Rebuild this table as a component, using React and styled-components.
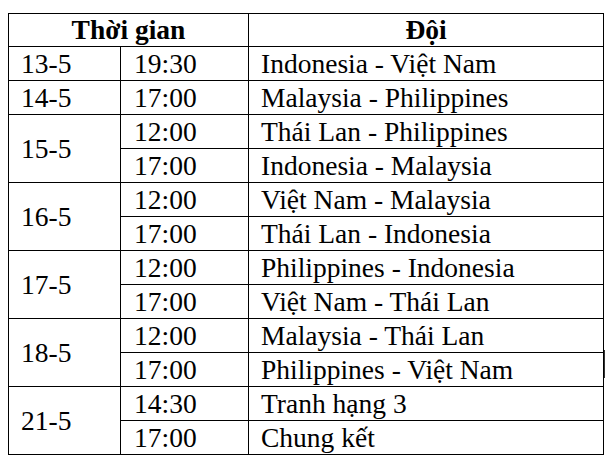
import React from "react";
import styled, { createGlobalStyle } from "styled-components";

const serifStack = `"Liberation Serif", "Times New Roman", Tinos, Times, "DejaVu Serif", serif`;

const GlobalStyle = createGlobalStyle`
  html, body {
    margin: 0;
    padding: 0;
    background: #ffffff;
  }
  body {
    font-family: ${serifStack};
    color: #000000;
  }
`;

const Page = styled.div`
  position: relative;
  width: 609px;
  height: 466px;
  padding: 13px 0 0 8px;
  box-sizing: border-box;
`;

const Table = styled.table`
  border-collapse: collapse;
  table-layout: fixed;
  width: 595px;
  font-family: ${serifStack};
  font-size: 27.5px;
  line-height: 1;
`;

const HeadCell = styled.th`
  border: 1px solid #000;
  height: 32px;
  padding: 0;
  font-weight: bold;
  text-align: center;
  vertical-align: middle;
`;

const Cell = styled.td`
  border: 1px solid #000;
  height: 33px;
  padding: 0 0 0 ${(p) => p.$pad || 12}px;
  vertical-align: middle;
  white-space: nowrap;
`;

const Cursor = styled.span`
  position: absolute;
  left: 604px;
  top: 350px;
  width: 1px;
  height: 28px;
  background: #333;
`;

const schedule = [
  { day: "13-5", games: [["19:30", "Indonesia - Việt Nam"]] },
  { day: "14-5", games: [["17:00", "Malaysia - Philippines"]] },
  {
    day: "15-5",
    games: [
      ["12:00", "Thái Lan - Philippines"],
      ["17:00", "Indonesia - Malaysia"],
    ],
  },
  {
    day: "16-5",
    games: [
      ["12:00", "Việt Nam - Malaysia"],
      ["17:00", "Thái Lan - Indonesia"],
    ],
  },
  {
    day: "17-5",
    games: [
      ["12:00", "Philippines - Indonesia"],
      ["17:00", "Việt Nam - Thái Lan"],
    ],
  },
  {
    day: "18-5",
    games: [
      ["12:00", "Malaysia - Thái Lan"],
      ["17:00", "Philippines - Việt Nam"],
    ],
  },
  {
    day: "21-5",
    games: [
      ["14:30", "Tranh hạng 3"],
      ["17:00", "Chung kết"],
    ],
  },
];

export default function App() {
  return (
    <Page>
      <GlobalStyle />
      <Table>
        <colgroup>
          <col style={{ width: 112 }} />
          <col style={{ width: 128 }} />
          <col style={{ width: 355 }} />
        </colgroup>
        <thead>
          <tr>
            <HeadCell colSpan={2}>Thời gian</HeadCell>
            <HeadCell>Đội</HeadCell>
          </tr>
        </thead>
        <tbody>
          {schedule.map((d) =>
            d.games.map((g, i) => (
              <tr key={d.day + g[0]}>
                {i === 0 && <Cell rowSpan={d.games.length}>{d.day}</Cell>}
                <Cell $pad={13}>{g[0]}</Cell>
                <Cell>{g[1]}</Cell>
              </tr>
            ))
          )}
        </tbody>
      </Table>
      <Cursor />
    </Page>
  );
}
